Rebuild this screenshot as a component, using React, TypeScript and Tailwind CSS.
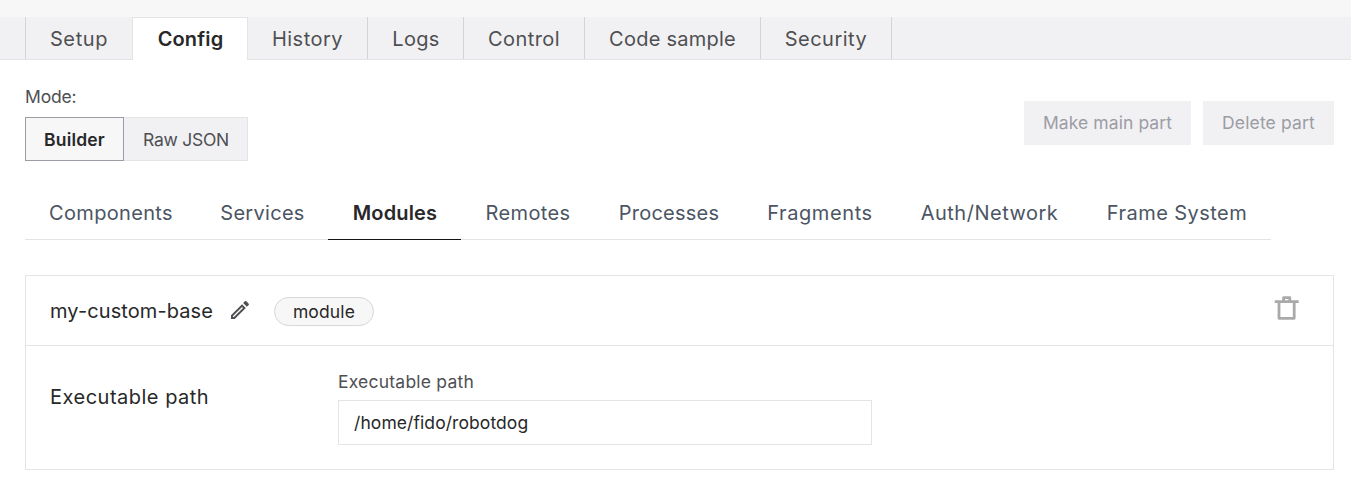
const mainTabs = [
  { label: "Setup", cell: "w-[107px] border-l border-[#d3d3d9]", track: "tracking-[0.6px]" },
  { label: "Config", cell: "w-[116px] border-x border-t border-[#e4e4e6] pl-px", track: "tracking-[0.15px]", active: true },
  { label: "History", cell: "w-[119px]", track: "tracking-[0.5px]" },
  { label: "Logs", cell: "w-[96px] border-l border-[#d3d3d9] pl-px", track: "tracking-[0.3px]" },
  { label: "Control", cell: "w-[121px] border-l border-[#d3d3d9]", track: "tracking-[0.45px]" },
  { label: "Code sample", cell: "w-[176px] border-l border-[#d3d3d9]", track: "tracking-[0.24px]" },
  { label: "Security", cell: "w-[132px] border-x border-[#d3d3d9]", track: "tracking-[0.5px]" },
];

const configTabs = [
  { label: "Components", cell: "w-[171px] pl-px", track: "tracking-[0.32px]" },
  { label: "Services", cell: "w-[132px] pl-px", track: "tracking-[0.3px]" },
  { label: "Modules", cell: "w-[133px] pl-px", track: "tracking-[0.15px]", active: true },
  { label: "Remotes", cell: "w-[134px]", track: "tracking-[0.4px]" },
  { label: "Processes", cell: "w-[148px]", track: "tracking-[0.25px]" },
  { label: "Fragments", cell: "w-[154px]", track: "tracking-[0.6px]" },
  { label: "Auth/Network", cell: "w-[185px]", track: "tracking-[0.5px]" },
  { label: "Frame System", cell: "w-[189px] pl-px", track: "tracking-[0.45px]" },
];

function PencilIcon() {
  return (
    <svg viewBox="0 0 24 24" className="mb-px size-6 shrink-0" fill="#4e4f52">
      <path d="M14.06,9L15,9.94L5.92,19H5V18.08L14.06,9M17.66,3C17.41,3 17.15,3.1 16.96,3.29L15.13,5.12L18.88,8.87L20.71,7.04C21.1,6.65 21.1,6 20.71,5.63L18.37,3.29C18.17,3.09 17.92,3 17.66,3M14.06,6.19L3,17.25V21H6.75L17.81,9.94L14.06,6.19Z" />
    </svg>
  );
}

function TrashIcon() {
  return (
    <svg viewBox="0 0 25 26" className="h-[26px] w-[25px]" fill="none" stroke="#aaaaaa" strokeWidth="2.8">
      <path d="M0.7 6.6H24.7M5 6.6V23.3H20.2V6.6" strokeLinejoin="round" />
      <path d="M9.6 6V2.6H15.8V6" strokeLinejoin="round" />
    </svg>
  );
}

export default function App() {
  return (
    <div className="h-[478px] overflow-hidden bg-white font-['Inter','Liberation_Sans',sans-serif] text-[#282829]">
      <div className="h-[17px] bg-[#f7f7f8]" />
      <nav className="flex h-[43px] bg-[#f1f1f4] pl-[25px] text-[20px] text-[#4e4f52] shadow-[inset_0_-1px_0_#e4e4e6]">
        {mainTabs.map((t) => (
          <button
            key={t.label}
            className={`${t.cell} ${t.track} ${
              t.active ? "h-[43px] bg-white pb-px font-semibold text-[#282829]" : "h-[42px]"
            } flex items-center justify-center pt-px leading-none whitespace-nowrap`}
          >
            {t.label}
          </button>
        ))}
      </nav>

      <main className="pr-[17px] pl-[25px] text-[17.5px]">
        <div className="flex justify-between">
          <div className="pt-[25px]">
            <div className="h-8 leading-6 tracking-[-0.15px] text-[#4e4f52]">Mode:</div>
            <div className="flex h-11 tracking-[0.2px]">
              <button className="w-[99px] border border-[#9c9ca4] bg-[#f7f7f8] pt-[2px] font-semibold">Builder</button>
              <button className="w-[124px] border border-l-0 border-[#e4e4e6] bg-[#f1f1f4] pt-[2px] pl-px tracking-[-0.25px] text-[#4e4f52]">
                Raw JSON
              </button>
            </div>
          </div>
          <div className="flex gap-3 pt-[41px] text-[#9c9ca4]">
            <button className="h-11 w-[167px] bg-[#f1f1f4] tracking-[0.08px]">Make main part</button>
            <button className="h-11 w-[131px] bg-[#f1f1f4] tracking-[0.15px]">Delete part</button>
          </div>
        </div>

        <nav className="mt-[25px] flex h-[54px] w-[1246px] text-[20px] text-[#4b5563]">
          {configTabs.map((t) => (
            <button
              key={t.label}
              className={`${t.cell} ${t.track} ${
                t.active ? "border-[#131414] font-semibold text-[#282829]" : "border-[#e4e4e6]"
              } border-b pt-[2px] leading-[51px] whitespace-nowrap`}
            >
              {t.label}
            </button>
          ))}
        </nav>

        <section className="mt-[35px] h-[195px] border border-[#e4e4e6]">
          <header className="flex h-[70px] items-center border-b border-[#e4e4e6] pr-[34px] pl-6">
            <h2 className="w-[178px] text-[20px] tracking-[0.1px]">my-custom-base</h2>
            <PencilIcon />
            <span className="mt-[2px] ml-[22px] flex h-[29px] w-[100px] items-center justify-center rounded-full border border-[#d7d7d9] bg-[#f7f7f8] pt-px tracking-[0.15px]">
              module
            </span>
            <button className="mb-[5px] ml-auto">
              <TrashIcon />
            </button>
          </header>
          <div className="flex pl-6">
            <h3 className="w-[288px] pt-[36px] text-[20px] leading-[30px] tracking-[0.5px]">Executable path</h3>
            <div className="w-[534px] pt-[24px]">
              <label className="block h-[30px] leading-6 tracking-[0.22px] text-[#4e4f52]">Executable path</label>
              <input
                readOnly
                value="/home/fido/robotdog"
                className="block h-[45px] w-full border border-[#e4e4e6] px-[15px] tracking-[0.08px] outline-none"
              />
            </div>
          </div>
        </section>
      </main>
    </div>
  );
}
